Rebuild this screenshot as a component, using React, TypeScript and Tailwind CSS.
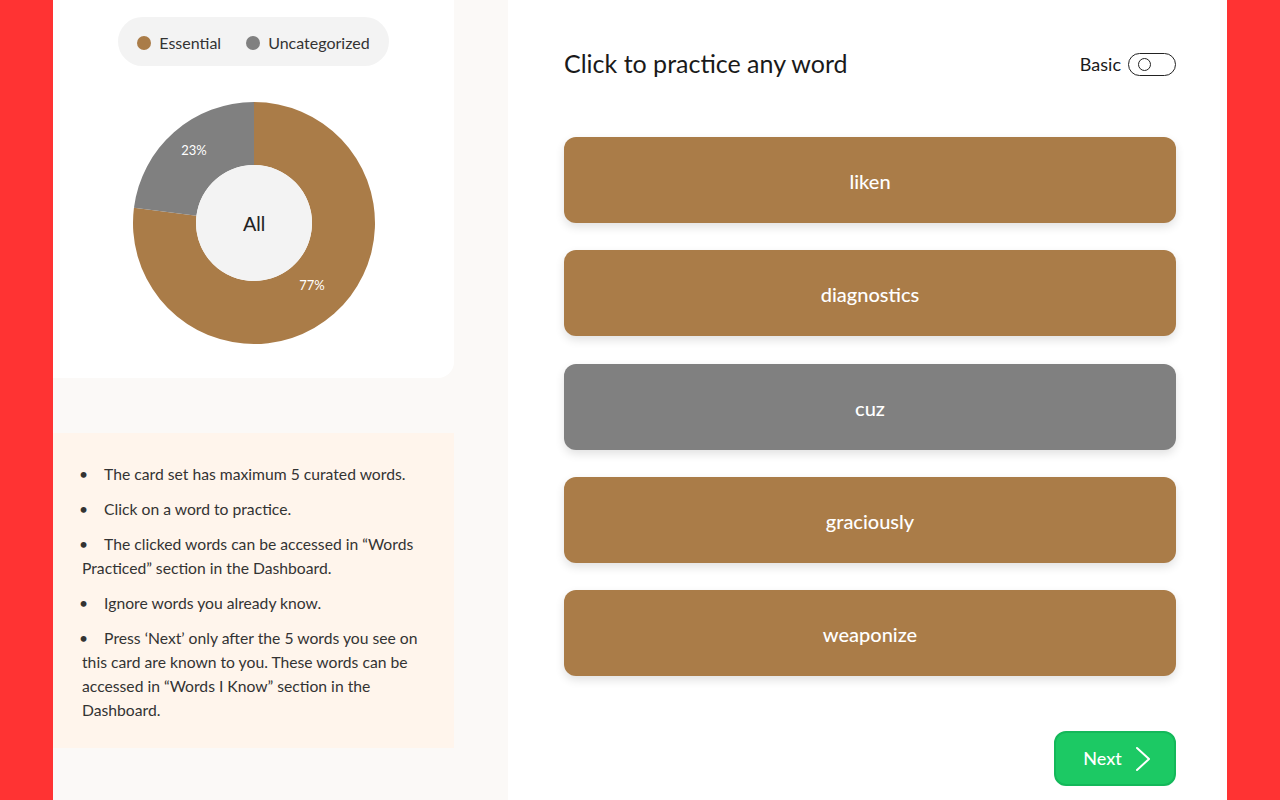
const words = [
  { label: 'liken', gray: false },
  { label: 'diagnostics', gray: false },
  { label: 'cuz', gray: true },
  { label: 'graciously', gray: false },
  { label: 'weaponize', gray: false },
];

const tips = [
  'The card set has maximum 5 curated words.',
  'Click on a word to practice.',
  'The clicked words can be accessed in \u201cWords Practiced\u201d section in the Dashboard.',
  'Ignore words you already know.',
  'Press \u2018Next\u2019 only after the 5 words you see on this card are known to you. These words can be accessed in \u201cWords I Know\u201d section in the Dashboard.',
];

function Donut() {
  return (
    <svg width="250" height="250" viewBox="0 0 250 250">
      <path d="M 125 4 A 121 121 0 1 1 4.95 109.83 L 67.46 117.73 A 58 58 0 1 0 125 67 Z" fill="#aa7c48" />
      <path d="M 4.95 109.83 A 121 121 0 0 1 125 4 L 125 67 A 58 58 0 0 0 67.46 117.73 Z" fill="#808080" />
      <circle cx="125" cy="125" r="58" fill="#f3f3f3" />
      <text x="65" y="57" textAnchor="middle" fill="#fff" fontSize="13" fontFamily="Lato, sans-serif">23%</text>
      <text x="183" y="192" textAnchor="middle" fill="#fff" fontSize="13" fontFamily="Lato, sans-serif">77%</text>
      <text x="125" y="133" textAnchor="middle" fill="#222" fontSize="20" fontFamily="'Liberation Sans', Arial, sans-serif">All</text>
    </svg>
  );
}

export default function App() {
  return (
    <div className="flex h-[800px] w-full bg-[#ff3333] font-['Lato',sans-serif]">
      <div className="w-[53px] shrink-0" />

      {/* Left column */}
      <div className="flex w-[455px] shrink-0 flex-col bg-[#fbf9f7]">
        <div className="flex h-[378px] w-[401px] flex-col items-center rounded-br-2xl bg-white pt-[17px]">
          <div className="flex h-[49px] items-center gap-[25px] rounded-full bg-[#f3f3f3] px-[19px] pt-[2px] text-[16px] text-[#333]">
            <div className="flex items-center gap-[8px]">
              <span className="h-[14px] w-[14px] rounded-full bg-[#aa7c48]" />
              <span>Essential</span>
            </div>
            <div className="flex items-center gap-[8px]">
              <span className="h-[14px] w-[14px] rounded-full bg-[#808080]" />
              <span>Uncategorized</span>
            </div>
          </div>
          <div className="mt-[32px]">
            <Donut />
          </div>
        </div>

        <div className="mt-[55px] w-[401px] bg-[#fff5ec] pb-[26px] pl-[29px] pr-[20px] pt-[29px] text-[15.7px] leading-[24px] text-[#333]">
          <ul className="flex flex-col gap-[11px]">
            {tips.map((t) => (
              <li key={t}>
                <span className="-ml-[3px] mr-[16px] inline-block">&bull;</span>
                {t}
              </li>
            ))}
          </ul>
        </div>
      </div>

      {/* Right column */}
      <div className="flex w-[719px] shrink-0 flex-col bg-white pl-[56px] pr-[51px]">
        <div className="mt-[47px] flex h-[34px] items-center justify-between">
          <h1 className="text-[25px] text-[#1a1a1a]">Click to practice any word</h1>
          <div className="flex items-center gap-[7px] text-[18px] text-[#1a1a1a]">
            <span>Basic</span>
            <span className="flex h-[23px] w-[48px] items-center rounded-full border border-[#222] pl-[9px]">
              <span className="h-[13px] w-[13px] rounded-full border-[1.5px] border-[#222]" />
            </span>
          </div>
        </div>

        <div className="mt-[56px] flex flex-col gap-[27.25px]">
          {words.map((w) => (
            <button
              key={w.label}
              className={`flex h-[86px] w-full items-center justify-center rounded-xl pt-[2px] text-[20px] font-medium text-white shadow-[0_4px_10px_rgba(0,0,0,0.12)] ${
                w.gray ? 'bg-[#808080]' : 'bg-[#aa7c48]'
              }`}
            >
              {w.label}
            </button>
          ))}
        </div>

        <div className="mt-[55px] flex justify-end">
          <button className="flex h-[55px] w-[122px] items-center justify-center gap-[13px] rounded-xl border-2 border-[#14b85a] bg-[#1cc964] pl-[4px] text-[18px] font-medium text-white">
            <span>Next</span>
            <svg width="16" height="26" viewBox="0 0 16 26" fill="none">
              <polyline points="2,2 14,13 2,24" stroke="#fff" strokeWidth="2" strokeLinecap="round" strokeLinejoin="round" />
            </svg>
          </button>
        </div>
      </div>

      <div className="flex-1" />
    </div>
  );
}
